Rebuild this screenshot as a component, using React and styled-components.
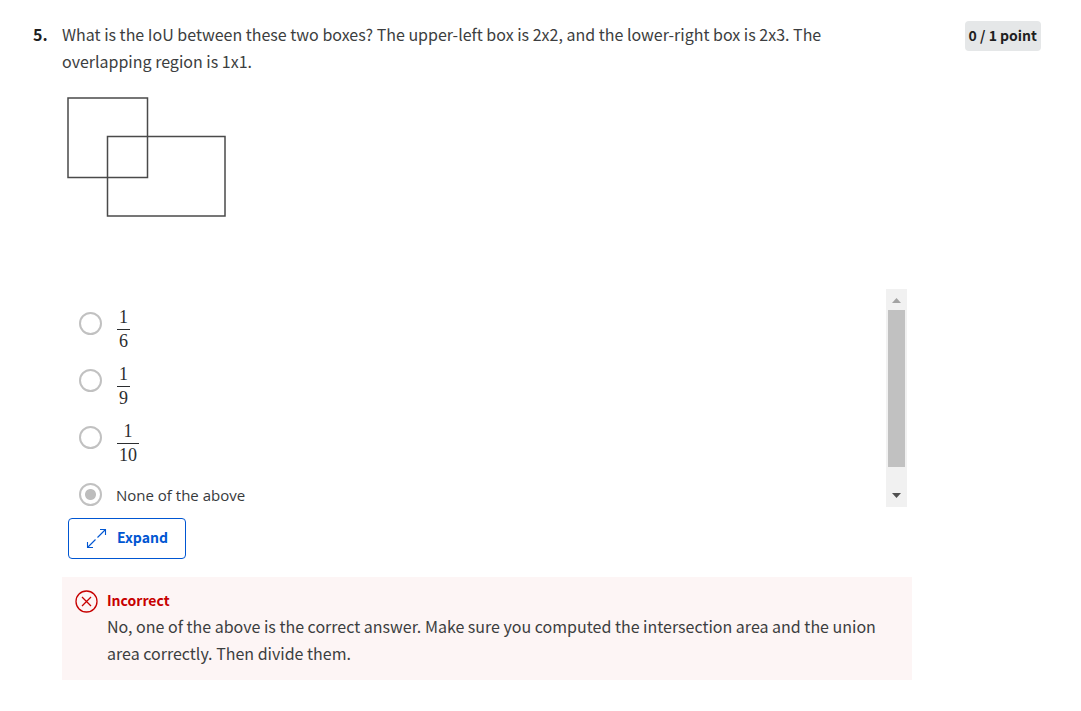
import React, { useState } from "react";
import styled, { createGlobalStyle } from "styled-components";

const GlobalStyle = createGlobalStyle`
  * { box-sizing: border-box; }
  body {
    margin: 0;
    background: #fff;
    color: #3c3e40;
    font-family: "Noto Sans CJK SC", "Noto Sans", sans-serif;
    font-size: 16px;
    line-height: 27px;
  }
`;

const Question = styled.main`
  display: grid;
  grid-template-columns: 29px minmax(0, 1fr) auto;
  align-items: start;
  padding: 21px 40px 31px 33px;
`;

const QuestionNumber = styled.div`
  font-weight: 700;
  color: #1f1f1f;
`;

const Content = styled.div`
  min-width: 0;
  margin-right: 53px;
`;

const Prompt = styled.p`
  margin: 0;
  padding-right: 40px;
`;

const Figure = styled.svg`
  display: block;
  margin: 21px 0 0 5px;
`;

const Score = styled.div`
  padding: 0 4px 2px;
  border-radius: 4px;
  background: #e5e7e8;
  color: #1f1f1f;
  font-size: 14px;
  font-weight: 700;
  line-height: 28px;
  white-space: nowrap;
`;

const AnswerArea = styled.div`
  display: flex;
  height: 218px;
  margin: 71px 5px 11px 17px;
`;

const Answers = styled.fieldset`
  flex: 1;
  margin: 0;
  padding: 6px 0 0;
  border: 0;
`;

const Answer = styled.label`
  display: flex;
  align-items: flex-start;
  gap: 14px;
  height: 57px;
  padding-top: 17px;
`;

const Radio = styled.input`
  appearance: none;
  flex: none;
  width: 23px;
  height: 23px;
  margin: 0;
  border: 2px solid #c1c1c1;
  border-radius: 50%;
  background: ${(p) => (p.checked ? "radial-gradient(circle, #bdbdbd 5px, #fff 6px)" : "#fff")};
`;

const AnswerText = styled.span`
  color: #373a3c;
  font-family: "Open Sans", "Noto Sans", sans-serif;
  font-size: 15px;
  line-height: 24px;
`;

const Fraction = styled.span`
  display: inline-flex;
  flex-direction: column;
  margin: -7px 0 0 1px;
  color: #2b2d2f;
  font-family: "Liberation Serif", serif;
  font-size: 18px;
  line-height: 24px;
  text-align: center;
`;

const Numerator = styled.span`
  padding: 0 2px;
  border-bottom: 1px solid #2b2d2f;
`;

const Denominator = styled.span`
  padding: 0 2px;
  line-height: 22px;
`;

const ScrollTrack = styled.div`
  display: flex;
  flex-direction: column;
  align-items: center;
  width: 21px;
  background: #f1f1f1;
`;

const ScrollThumb = styled.div`
  width: 17px;
  height: 157px;
  margin-bottom: auto;
  background: #c1c1c1;
`;

const ScrollArrow = styled.svg`
  display: block;
  flex: none;
  width: 21px;
  height: 21px;
`;

const ExpandButton = styled.button`
  display: flex;
  align-items: center;
  gap: 9px;
  height: 41px;
  margin-left: 6px;
  padding: 0 17px 2px;
  border: 1px solid #0056d2;
  border-radius: 4px;
  background: #fff;
  color: #0056d2;
  font: inherit;
  font-size: 14px;
  font-weight: 700;
`;

const Feedback = styled.section`
  display: flex;
  gap: 9px;
  margin-top: 18px;
  padding: 10px 16px 13px 13px;
  background: #fdf5f5;
`;

const FeedbackIcon = styled.svg`
  flex: none;
  margin-top: 3px;
`;

const FeedbackTitle = styled.h2`
  margin: 0;
  color: #c70000;
  font-size: 14px;
  font-weight: 700;
  line-height: 26px;
`;

const FeedbackText = styled.p`
  margin: 0;
`;

const options = [
  { id: "sixth", top: "1", bottom: "6" },
  { id: "ninth", top: "1", bottom: "9" },
  { id: "tenth", top: "1", bottom: "10" },
  { id: "none", text: "None of the above" },
];

export default function App() {
  const [selected, setSelected] = useState("none");
  return (
    <>
      <GlobalStyle />
      <Question>
        <QuestionNumber>5.</QuestionNumber>
        <Content>
          <Prompt>
            What is the IoU between these two boxes? The upper-left box is 2x2, and the
            lower-right box is 2x3. The overlapping region is 1x1.
          </Prompt>
          <Figure width="159" height="122" viewBox="0 0 159 122" fill="none" stroke="#4a4a4a" strokeWidth="1.5" role="img" aria-label="Two overlapping boxes">
            <rect x="1" y="2" width="79.5" height="79.5" />
            <rect x="40.5" y="40.5" width="117.5" height="79.5" />
          </Figure>
          <AnswerArea>
            <Answers aria-label="Answers">
              {options.map((o) => (
                <Answer key={o.id}>
                  <Radio
                    type="radio"
                    name="answer"
                    checked={selected === o.id}
                    onChange={() => setSelected(o.id)}
                  />
                  {o.text ? (
                    <AnswerText>{o.text}</AnswerText>
                  ) : (
                    <Fraction>
                      <Numerator>{o.top}</Numerator>
                      <Denominator>{o.bottom}</Denominator>
                    </Fraction>
                  )}
                </Answer>
              ))}
            </Answers>
            <ScrollTrack aria-hidden="true">
              <ScrollArrow viewBox="0 0 21 21">
                <path d="M6 14 L10.5 9 L15 14 Z" fill="#a3a3a3" />
              </ScrollArrow>
              <ScrollThumb />
              <ScrollArrow viewBox="0 0 21 21">
                <path d="M6 7 L10.5 12 L15 7 Z" fill="#505050" />
              </ScrollArrow>
            </ScrollTrack>
          </AnswerArea>
          <ExpandButton type="button">
            <svg width="22" height="22" viewBox="0 0 22 22" fill="none" stroke="currentColor" strokeWidth="1.1" aria-hidden="true">
              <path d="M11.5 10.5 L19.5 2.5 M14 2.5 H19.5 V8 M9.5 12.5 L1.5 20.5 M1.5 15 V20.5 H7" />
            </svg>
            Expand
          </ExpandButton>
          <Feedback>
            <FeedbackIcon width="23" height="23" viewBox="0 0 23 23" fill="none" stroke="#c70000" strokeWidth="1.3" aria-hidden="true">
              <circle cx="11.5" cy="11.5" r="10.5" />
              <path d="M7 7 L16 16 M16 7 L7 16" />
            </FeedbackIcon>
            <div>
              <FeedbackTitle>Incorrect</FeedbackTitle>
              <FeedbackText>
                No, one of the above is the correct answer. Make sure you computed the
                intersection area and the union area correctly. Then divide them.
              </FeedbackText>
            </div>
          </Feedback>
        </Content>
        <Score>0 / 1 point</Score>
      </Question>
    </>
  );
}
